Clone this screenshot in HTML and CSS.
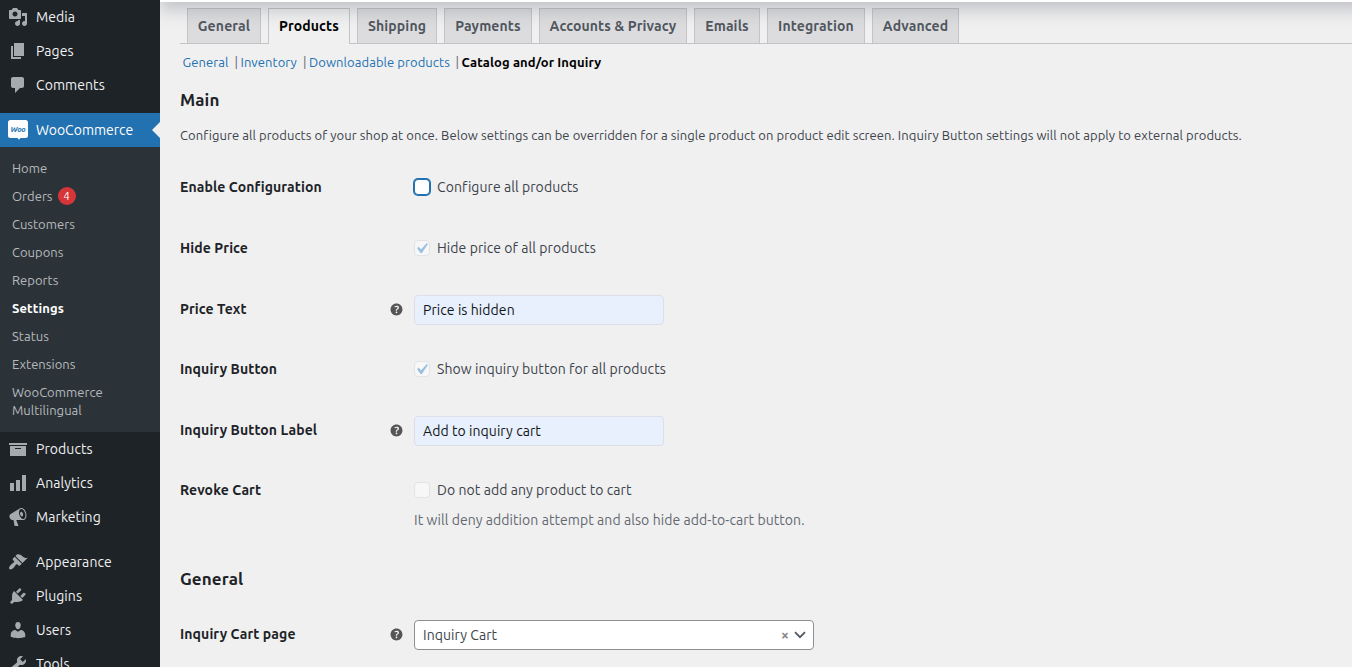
FILE: index.html
```html
<!DOCTYPE html>
<html lang="en">
<head>
<meta charset="utf-8">
<title>WooCommerce settings</title>
<link rel="stylesheet" href="styles.css">
</head>
<body>
<svg class="sprite" aria-hidden="true">
  <symbol id="help" viewBox="0 0 20 20"><path d="M17 10c0-3.87-3.14-7-7-7-3.87 0-7 3.13-7 7s3.13 7 7 7c3.86 0 7-3.13 7-7zm-6.3 1.48H9.14v-.43c0-.38.08-.7.24-.98s.46-.57.88-.89c.41-.29.68-.53.81-.71.14-.18.2-.39.2-.62 0-.25-.09-.44-.28-.58-.19-.13-.45-.19-.79-.19-.58 0-1.25.15-2 .46l-.64-1.28c.87-.49 1.8-.74 2.77-.74.81 0 1.45.2 1.92.58.48.39.71.91.71 1.55 0 .43-.09.8-.29 1.11-.19.32-.57.67-1.11 1.06-.38.28-.61.49-.71.63-.1.15-.15.34-.15.57v.46zm-1.47 2.74c-.18-.17-.27-.42-.27-.73 0-.33.08-.58.26-.75s.43-.25.77-.25c.32 0 .57.09.75.26s.27.42.27.74c0 .3-.09.55-.27.72-.18.18-.43.27-.75.27-.33 0-.58-.09-.76-.26z"/></symbol>
  <symbol id="tick" viewBox="0 0 20 20"><path d="M14.83 4.89l1.34.94-5.81 8.38H9.02L5.78 9.67l1.34-1.25 2.57 2.4z"/></symbol>
</svg>
<div class="layout">
  <nav class="sidebar">
    <a class="item media"><svg class="icon" viewBox="0 0 20 20"><path d="M13 11V4c0-.55-.45-1-1-1h-1.67L9 1H5L3.67 3H2c-.55 0-1 .45-1 1v7c0 .55.45 1 1 1h10c.55 0 1-.45 1-1zM7 4.5c1.38 0 2.5 1.12 2.5 2.5S8.38 9.5 7 9.5 4.5 8.38 4.5 7 5.62 4.5 7 4.5zM14 6h5v10.5c0 1.38-1.12 2.5-2.5 2.5S14 17.88 14 16.5s1.12-2.5 2.5-2.5c.17 0 .34.02.5.05V9h-3V6zm-4 8.05V13h2v3.5c0 1.38-1.12 2.5-2.5 2.5S7 17.88 7 16.5 8.12 14 9.5 14c.17 0 .34.02.5.05z"/></svg><span>Media</span></a>
    <a class="item"><svg class="icon" viewBox="0 0 20 20"><path d="M6 15V2h10v13H6zm-1 1h8v2H3V5h2v11z"/></svg><span>Pages</span></a>
    <a class="item"><svg class="icon" viewBox="0 0 20 20"><path d="M5 2h9c1.1 0 2 .9 2 2v7c0 1.1-.9 2-2 2h-2l-5 5v-5H5c-1.1 0-2-.9-2-2V4c0-1.1.9-2 2-2z"/></svg><span>Comments</span></a>
    <a class="item current gap"><svg class="icon woo" viewBox="0 0 20 20"><path d="M2.500 0h15a2.500 2.500 0 0 1 2.500 2.500v13a2.500 2.500 0 0 1-2.500 2.500h-5l-1.500 1.800L9.500 18h-7A2.500 2.500 0 0 1 0 15.500v-13A2.500 2.500 0 0 1 2.500 0z"/><text x="10" y="11.500" text-anchor="middle">Woo</text></svg><span>WooCommerce</span></a>
    <div class="submenu">
      <a>Home</a>
      <a>Orders<b class="count">4</b></a>
      <a>Customers</a>
      <a>Coupons</a>
      <a>Reports</a>
      <a class="active">Settings</a>
      <a>Status</a>
      <a>Extensions</a>
      <a>WooCommerce<br>Multilingual</a>
    </div>
    <a class="item"><svg class="icon" viewBox="0 0 20 20"><path d="M19 4v2H1V4h18zM2 7h16v10H2V7zm11 3V9H7v1h6z"/></svg><span>Products</span></a>
    <a class="item"><svg class="icon" viewBox="0 0 20 20"><path d="M18 18V2h-4v16h4zm-6 0V7H8v11h4zm-6 0v-8H2v8h4z"/></svg><span>Analytics</span></a>
    <a class="item"><svg class="icon" viewBox="0 0 20 20"><path d="M18.150 5.940c.46 1.620.38 3.220-.02 4.480-.42 1.280-1.260 2.180-2.300 2.480-.16.06-.26.06-.4.06-.06.02-.12.02-.18.02-.06.02-.14.02-.22.02h-6.800l2.220 5.500c.02.14-.06.26-.14.34-.08.1-.24.16-.34.16H6.950c-.1 0-.26-.06-.34-.16-.08-.08-.16-.2-.14-.34l-1-5.500H4.250l-.02-.02c-.5.06-1.080-.18-1.540-.62s-.88-1.080-1.060-1.880c-.24-.8-.2-1.560-.02-2.200.18-.62.58-1.080 1.060-1.300l.02-.02 9-5.400c.1-.06.18-.1.24-.16.06-.04.14-.08.24-.12.16-.08.28-.12.5-.18 1.040-.3 2.240.1 3.220.98s1.840 2.240 2.260 3.860zm-2.580 5.980h-.02c.4-.1.74-.34 1.040-.7.58-.7.86-1.760.86-3.040 0-.64-.1-1.300-.28-1.980-.34-1.360-1.020-2.500-1.780-3.240s-1.680-1.100-2.460-.88c-.82.22-1.400.96-1.700 2-.32 1.040-.28 2.360.06 3.720.38 1.360 1 2.500 1.800 3.240.78.74 1.620 1.100 2.480.88zm-2.540-7.080c.22-.04.42-.02.62.04.38.16.76.48 1.020 1s.42 1.200.42 1.780c0 .3-.04.56-.12.8-.18.48-.44.84-.86.94-.34.1-.8-.06-1.140-.4s-.64-.86-.78-1.500c-.18-.62-.12-1.240.02-1.720s.48-.84.82-.94z"/></svg><span>Marketing</span></a>
    <a class="item gap"><svg class="icon" viewBox="0 0 20 20"><path d="M14.480 11.060L7.410 3.990l1.500-1.500c.5-.56 2.300-.47 3.510.32 1.210.8 1.430 1.280 2.910 2.100 1.180.64 2.450 1.260 4.450.85zm-.71.71L6.700 4.700 4.930 6.470c-.39.39-.39 1.020 0 1.410l1.060 1.060c.39.39.39 1.030 0 1.420-.6.6-1.430 1.110-2.210 1.690-.35.26-.7.53-1.010.84C1.430 14.230.4 16.080 1.400 17.070c.99 1 2.840-.03 4.180-1.360.31-.31.58-.66.85-1.020.57-.78 1.080-1.610 1.690-2.210.39-.39 1.020-.39 1.410 0l1.060 1.060c.39.39 1.020.39 1.410 0z"/></svg><span>Appearance</span></a>
    <a class="item"><svg class="icon" viewBox="0 0 20 20"><path d="M13.110 4.360L9.870 7.600 8 5.730l3.240-3.240c.35-.34 1.050-.2 1.560.32.52.51.66 1.210.31 1.550zm-8 1.770l.91-1.120 9.010 9.010-1.190.84c-.71.71-2.630 1.160-3.820 1.160H6.140L4.900 17.260c-.59.59-1.540.59-2.120 0-.59-.58-.59-1.530 0-2.120l1.240-1.240v-3.880c0-1.130.4-3.190 1.090-3.890zm7.260 3.970l3.240-3.240c.34-.35 1.040-.21 1.550.31.52.51.66 1.210.31 1.550l-3.240 3.250z"/></svg><span>Plugins</span></a>
    <a class="item"><svg class="icon" viewBox="0 0 20 20"><path d="M10 9.250c-2.270 0-2.730-3.440-2.730-3.440C7 4.020 7.820 2 9.970 2c2.160 0 2.980 2.020 2.710 3.810 0 0-.41 3.440-2.680 3.440zm0 2.570L12.720 10c2.390 0 4.520 2.330 4.520 4.530v2.490s-3.650 1.130-7.240 1.130c-3.650 0-7.240-1.130-7.240-1.130v-2.490c0-2.250 1.940-4.480 4.470-4.480z"/></svg><span>Users</span></a>
    <a class="item"><svg class="icon" viewBox="0 0 20 20"><path d="M16.680 9.770c-1.340 1.340-3.300 1.670-4.950.99l-5.410 6.520c-.99.99-2.590.99-3.580 0s-.99-2.590 0-3.570l6.520-5.420c-.68-1.650-.35-3.610.99-4.950 1.280-1.280 3.120-1.620 4.720-1.060l-2.890 2.890 2.820 2.820 2.860-2.870c.53 1.580.18 3.390-1.080 4.650zM3.810 16.210c.4.39 1.040.39 1.430 0 .4-.4.4-1.040 0-1.430-.39-.4-1.030-.4-1.430 0-.39.39-.39 1.030 0 1.430z"/></svg><span>Tools</span></a>
  </nav>
  <main class="content">
    <div class="topbar"></div>
    <div class="tabs">
      <a class="tab t1">General</a><a class="tab t2 on">Products</a><a class="tab t3">Shipping</a><a class="tab t4">Payments</a><a class="tab t5">Accounts &amp; Privacy</a><a class="tab t6">Emails</a><a class="tab t7">Integration</a><a class="tab t8">Advanced</a>
    </div>
    <div class="sections"><a class="s1">General</a><i>|</i><a class="s2">Inventory</a><i>|</i><a class="s3">Downloadable products</a><i>|</i><a class="s4 on">Catalog and/or Inquiry</a></div>
    <h2>Main</h2>
    <p class="intro">Configure all products of your shop at once. Below settings can be overridden for a single product on product edit screen. Inquiry Button settings will not apply to external products.</p>
    <div class="form">
      <div class="row"><span class="label">Enable Configuration</span><div class="field"><span class="check focus"></span><span>Configure all products</span></div></div>
      <div class="row"><span class="label">Hide Price</span><div class="field"><span class="check off"><svg><use href="#tick"/></svg></span><span>Hide price of all products</span></div></div>
      <div class="row short"><span class="label">Price Text</span><svg class="help"><use href="#help"/></svg><div class="field"><span class="input">Price is hidden</span></div></div>
      <div class="row"><span class="label">Inquiry Button</span><div class="field"><span class="check off"><svg><use href="#tick"/></svg></span><span>Show inquiry button for all products</span></div></div>
      <div class="row short"><span class="label">Inquiry Button Label</span><svg class="help"><use href="#help"/></svg><div class="field"><span class="input">Add to inquiry cart</span></div></div>
      <div class="row revoke"><span class="label">Revoke Cart</span><div class="field"><span class="check off"></span><span>Do not add any product to cart</span></div></div>
      <p class="desc">It will deny addition attempt and also hide add-to-cart button.</p>
    </div>
    <h2 class="second">General</h2>
    <div class="row last"><span class="label">Inquiry Cart page</span><svg class="help"><use href="#help"/></svg><div class="field"><span class="select"><span class="value">Inquiry Cart</span><b>×</b><svg viewBox="0 0 12 8"><path d="M1 1.200L6 6.200l5-5"/></svg></span></div></div>
  </main>
</div>
</body>
</html>
```
FILE: styles.css
```css
* { box-sizing: border-box; }
body {
  margin: 0;
  height: 667px;
  overflow: hidden;
  background: #f0f0f1;
  color: #3c434a;
  font: 14px/20px Ubuntu, "Open Sans", "Noto Sans", sans-serif;
  letter-spacing: 0.07px;
}
.sprite { display: none; }
.layout { display: flex; height: 667px; overflow: hidden; }

/* Admin menu */
.sidebar {
  display: flex;
  flex: none;
  flex-direction: column;
  width: 160px;
  height: 681px;
  background: #1d2327;
  position: relative;
  z-index: 3;
}
.item {
  display: flex;
  flex: none;
  align-items: center;
  gap: 8px;
  height: 34px;
  padding-left: 8px;
  color: #f0f0f1;
}
.icon { width: 20px; height: 20px; fill: #a7aaad; }
.gap { margin-top: 11px; }
.current { position: relative; background: #2271b1; color: #fff; letter-spacing: 0; }
.current::after {
  content: "";
  position: absolute;
  top: 9px;
  right: 0;
  border: 8px solid transparent;
  border-left: 0;
  border-right-color: #f0f0f1;
}
.woo { fill: #fff; }
.woo text { fill: #2271b1; font: italic 700 7.5px Ubuntu, "Open Sans", sans-serif; letter-spacing: -0.1px; }
.submenu {
  display: flex;
  flex: none;
  flex-direction: column;
  height: 285px;
  padding-top: 7px;
  background: #2c3338;
  font-size: 13px;
  line-height: 18px;
  letter-spacing: 0.03px;
}
.submenu a { display: flex; padding: 5px 12px; color: #b5b9bd; }
.submenu .active { color: #fff; font-weight: 700; letter-spacing: 0.12px; }
.count {
  width: 18px;
  height: 18px;
  margin-left: 5px;
  border-radius: 9px;
  background: #d63638;
  color: #fff;
  font-size: 11px;
  font-weight: 400;
  text-align: center;
}

/* Settings page */
.content { position: relative; flex: 1; min-width: 0; padding: 8px 0 0 20px; }
.topbar {
  position: absolute;
  z-index: 2;
  top: -58px;
  right: -40px;
  left: 0;
  height: 60px;
  background: #fff;
  box-shadow: 0 8px 16px rgba(85, 93, 102, 0.3);
}
.tabs {
  display: flex;
  height: 36px;
  padding-left: 7px;
  gap: 7px;
  border-bottom: 1px solid #c3c4c7;
}
.tab {
  height: 35px;
  border: 1px solid #c3c4c7;
  border-bottom: 0;
  background: #dcdcde;
  color: #50575e;
  font-weight: 700;
  line-height: 34px;
  text-align: center;
  white-space: nowrap;
  letter-spacing: 0.13px;
}
.tab.on { height: 36px; background: #f0f0f1; color: #000; }
.t1 { width: 74px; }
.t2 { width: 82px; }
.t3 { width: 80px; }
.t4 { width: 88px; }
.t5 { width: 148px; }
.t6 { width: 66px; }
.t7 { width: 98px; }
.t8 { width: 87px; }
.sections {
  display: flex;
  height: 20px;
  margin-top: 8px;
  padding-left: 2.5px;
  color: #2271b1;
  font-size: 13px;
  letter-spacing: 0.07px;
  white-space: nowrap;
}
.sections i { width: 6px; color: #646970; font-style: normal; }
.s1 { width: 52px; }
.s2 { width: 62.500px; }
.s3 { width: 146.500px; }
.sections .on { color: #000; font-weight: 700; letter-spacing: 0.12px; }
h2 {
  margin: 18px 0 0;
  color: #1d2327;
  font-size: 17px;
  line-height: 20px;
  letter-spacing: 0.1px;
}
.intro { margin: 15px 0 0; font-size: 13px; white-space: nowrap; letter-spacing: 0.068px; }
.form { padding-top: 32px; }
.row { position: relative; display: flex; height: 61px; }
.row.short { height: 60px; }
.row .label { width: 209px; color: #1d2327; font-weight: 700; letter-spacing: 0.1px; }
.help { width: 17px; height: 17px; margin: 2px 0 0 -1px; fill: #555; }
.field { display: flex; position: absolute; left: 234px; top: 0; height: 20px; align-items: center; gap: 7px; white-space: nowrap; }
.check {
  width: 16px;
  height: 16px;
  border: 1px solid #8c8f94;
  border-radius: 4px;
  background: #fff;
}
.check.focus { border-color: #2271b1; box-shadow: 0 0 0 1px #2271b1; }
.check.off { border-color: #e3e3e5; background: #f7f7f8; }
.check svg { display: block; width: 21px; height: 21px; margin: -3px 0 0 -4px; fill: #9ac0e1; }
.input {
  width: 250px;
  height: 30px;
  margin-top: 2px;
  padding: 0 8px;
  border: 1px solid #dcdfe8;
  border-radius: 4px;
  background: #e8f0fe;
  color: #101517;
  line-height: 28px;
}
.revoke { height: 30px; }
.desc { margin: 0 0 0 234px; color: #646970; }
.second { margin-top: 39px; }
.last { margin-top: 35px; }
.select {
  display: flex;
  align-items: center;
  width: 400px;
  height: 30px;
  margin-top: 2px;
  padding: 0 7px 0 8px;
  border: 1px solid #8c8f94;
  border-radius: 4px;
  background: #fff;
}
.select .value { flex: 1; }
.select b { margin-right: 5px; color: #888; font-size: 14px; }
.select svg { width: 12px; height: 8px; fill: none; stroke: #50575e; stroke-width: 1.7; }
```
